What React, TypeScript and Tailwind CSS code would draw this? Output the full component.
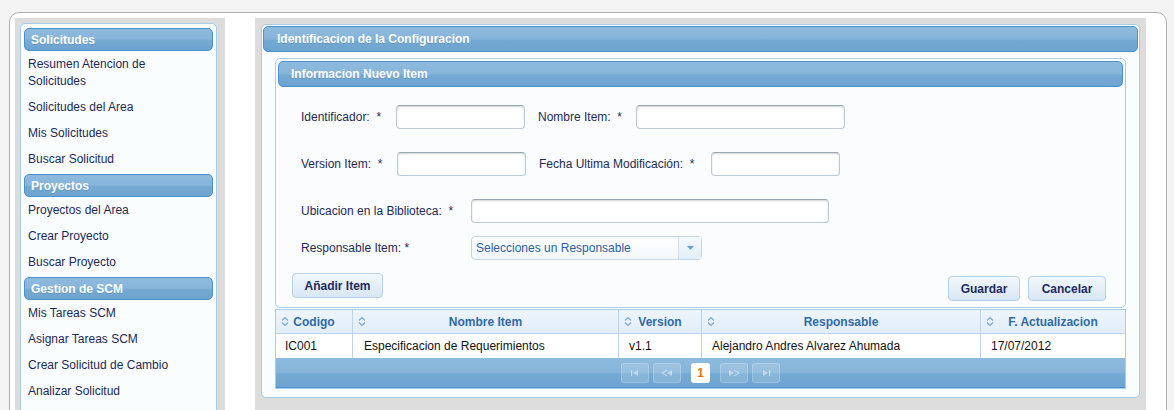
import React from "react";

const barBg =
  "bg-[linear-gradient(180deg,#8dbadd_0%,#87b5da_48%,#74a9d3_56%,#6da4cf_100%)]";

function SideHeader({ title, first }: { title: string; first?: boolean }) {
  return (
    <div
      className={`${first ? "mt-[4px]" : "mt-[2px]"} mx-[3px] h-[23px] rounded-[5px] border border-[#4b90cf] ${barBg} pl-[6px] flex items-center text-[12px] font-bold text-white [text-shadow:0_1px_0_rgba(0,0,0,0.12)]`}
    >
      {title}
    </div>
  );
}

function SideItem({ children }: { children: React.ReactNode }) {
  return (
    <div className="px-[7px] py-[4.5px] text-[12px] leading-[17px] text-[#1c2856]">
      {children}
    </div>
  );
}

function TextInput({ w }: { w: string }) {
  return (
    <input
      type="text"
      className={`${w} h-[24px] rounded-[4px] border border-[#bccad6] border-t-[#9aa6b1] bg-white shadow-[inset_0_1px_2px_rgba(0,0,0,0.18)] outline-none`}
    />
  );
}

function Btn({ label, w }: { label: string; w: string }) {
  return (
    <button
      type="button"
      className={`${w} h-[25px] rounded-[4px] border border-[#b6d0e8] bg-[linear-gradient(180deg,#f1f7fd_0%,#e4eef8_55%,#d8e6f4_100%)] text-[12px] font-bold text-[#1d2c5c]`}
    >
      {label}
    </button>
  );
}

function SortIcon() {
  return (
    <svg
      width="8"
      height="11"
      viewBox="0 0 8 11"
      className="absolute left-[5px] top-[6px]"
    >
      <path d="M1 4.5 L4 1.5 L7 4.5" fill="none" stroke="#7ba8d5" strokeWidth="1.2" />
      <path d="M1 6.5 L4 9.5 L7 6.5" fill="none" stroke="#7ba8d5" strokeWidth="1.2" />
    </svg>
  );
}

function HeadCell({ label, last }: { label: string; last?: boolean }) {
  return (
    <div
      className={`relative flex h-[23px] items-center justify-center text-[12px] font-bold text-[#2f6aa6] ${last ? "" : "border-r border-[#bcd5ec]"}`}
    >
      <SortIcon />
      {label}
    </div>
  );
}

function RowCell({ label, pl, last }: { label: string; pl: string; last?: boolean }) {
  return (
    <div
      className={`flex h-[24px] items-center ${pl} text-[12px] text-[#111] ${last ? "" : "border-r border-[#bcd5ec]"}`}
    >
      {label}
    </div>
  );
}

function PagerBtn({ kind }: { kind: "first" | "prev" | "next" | "last" }) {
  const c = "rgba(255,255,255,0.45)";
  return (
    <div className="flex h-[20px] w-[28px] items-center justify-center rounded-[3px] border border-white/20 bg-white/15">
      <svg width="12" height="6" viewBox="0 0 12 6">
        {kind === "first" && (
          <>
            <rect x="2" y="0" width="1.2" height="6" fill={c} />
            <path d="M9 0 L4 3 L9 6 Z" fill={c} />
          </>
        )}
        {kind === "prev" && (
          <>
            <path d="M6 0 L1 3 L6 6" fill="none" stroke={c} strokeWidth="1.2" />
            <path d="M11 0 L6 3 L11 6 Z" fill={c} />
          </>
        )}
        {kind === "next" && (
          <>
            <path d="M1 0 L6 3 L1 6 Z" fill={c} />
            <path d="M6 0 L11 3 L6 6" fill="none" stroke={c} strokeWidth="1.2" />
          </>
        )}
        {kind === "last" && (
          <>
            <path d="M3 0 L8 3 L3 6 Z" fill={c} />
            <rect x="9" y="0" width="1.2" height="6" fill={c} />
          </>
        )}
      </svg>
    </div>
  );
}

export default function App() {
  return (
    <div className="h-[410px] overflow-hidden bg-[#f4f4f4] pt-[12px] font-['Liberation_Sans',Arial,sans-serif]">
      <div className="ml-[9px] flex h-[420px] w-[1158px] rounded-t-[10px] border border-[#aeaeae] bg-white px-[5px] pt-[5px] pr-[20px]">
        {/* sidebar */}
        <div className="flex w-[210px] flex-col bg-[#dcdcdc] pl-[5px] pr-[8px] pt-[5px]">
          <div className="flex-1 rounded-t-[5px] border border-[#a9cde9] bg-[#fafdfe]">
            <SideHeader title="Solicitudes" first />
            <SideItem>
              Resumen Atencion de
              <br />
              Solicitudes
            </SideItem>
            <SideItem>Solicitudes del Area</SideItem>
            <SideItem>Mis Solicitudes</SideItem>
            <SideItem>Buscar Solicitud</SideItem>
            <SideHeader title="Proyectos" />
            <SideItem>Proyectos del Area</SideItem>
            <SideItem>Crear Proyecto</SideItem>
            <SideItem>Buscar Proyecto</SideItem>
            <SideHeader title="Gestion de SCM" />
            <SideItem>Mis Tareas SCM</SideItem>
            <SideItem>Asignar Tareas SCM</SideItem>
            <SideItem>Crear Solicitud de Cambio</SideItem>
            <SideItem>Analizar Solicitud</SideItem>
          </div>
        </div>

        {/* main */}
        <div className="ml-[30px] w-[891px] bg-[#dcdcdc] px-[6px] pt-[6px]">
          <div className="rounded-[5px] border border-[#a9cde9] bg-[#fafdfe] p-[1px] pb-[8px]">
            <div
              className={`flex h-[26px] items-center rounded-[5px] border border-[#4b90cf] ${barBg} pl-[13px] text-[12px] font-bold text-white [text-shadow:0_1px_0_rgba(0,0,0,0.12)]`}
            >
              Identificacion de la Configuracion
            </div>

            <div className="mx-[12px] mt-[6px] rounded-[5px] border border-[#a9cde9] bg-[#fafcfd] p-[2px] pb-[6px]">
              <div
                className={`flex h-[26px] items-center rounded-[5px] border border-[#4b90cf] ${barBg} pl-[12px] text-[12px] font-bold text-white [text-shadow:0_1px_0_rgba(0,0,0,0.12)]`}
              >
                Informacion Nuevo Item
              </div>

              <div className="pl-[23px] text-[12px] text-[#1f2a56]">
                <div className="mt-[18px] flex items-center">
                  <span className="w-[95px]">Identificador:&nbsp; *</span>
                  <TextInput w="w-[129px]" />
                  <span className="ml-[13px] w-[98px]">Nombre Item:&nbsp; *</span>
                  <TextInput w="w-[209px]" />
                </div>
                <div className="mt-[23px] flex items-center">
                  <span className="w-[96px]">Version Item:&nbsp; *</span>
                  <TextInput w="w-[129px]" />
                  <span className="ml-[13px] w-[172px]">Fecha Ultima Modificación:&nbsp; *</span>
                  <TextInput w="w-[129px]" />
                </div>
                <div className="mt-[23px] flex items-center">
                  <span className="w-[170px]">Ubicacion en la Biblioteca:&nbsp; *</span>
                  <TextInput w="w-[358px]" />
                </div>
                <div className="mt-[13px] flex items-center">
                  <span className="w-[170px]">Responsable Item: *</span>
                  <div className="flex h-[24px] w-[231px] items-center rounded-[4px] border border-[#c3d6e8] bg-[linear-gradient(180deg,#ffffff_0%,#f3f7fb_100%)]">
                    <span className="flex-1 pl-[4px] text-[12px] text-[#2a5fa8]">
                      Selecciones un Responsable
                    </span>
                    <span className="flex h-full w-[23px] items-center justify-center border-l border-[#d3e1ee] bg-[linear-gradient(180deg,#f4f8fc_0%,#e3edf7_100%)]">
                      <svg width="7" height="4" viewBox="0 0 7 4">
                        <path d="M0 0 L7 0 L3.5 4 Z" fill="#6d9fd0" />
                      </svg>
                    </span>
                  </div>
                </div>
              </div>

              <div className="mt-[13px] flex items-start pl-[14px] pr-[17px]">
                <Btn label="Añadir Item" w="w-[91px]" />
                <div className="ml-auto mt-[3px] flex gap-[8px]">
                  <Btn label="Guardar" w="w-[72px]" />
                  <Btn label="Cancelar" w="w-[78px]" />
                </div>
              </div>
            </div>

            {/* table */}
            <div className="mx-[12px] mt-[1px] border border-[#a9cde9]">
              <div className="grid grid-cols-[77px_266px_83px_279px_1fr] border-b border-[#bcd5ec] bg-[linear-gradient(180deg,#edf5fd_0%,#e2edf8_100%)]">
                <HeadCell label="Codigo" />
                <HeadCell label="Nombre Item" />
                <HeadCell label="Version" />
                <HeadCell label="Responsable" />
                <HeadCell label="F. Actualizacion" last />
              </div>
              <div className="grid grid-cols-[77px_266px_83px_279px_1fr] bg-white">
                <RowCell label="IC001" pl="pl-[9px]" />
                <RowCell label="Especificacion de Requerimientos" pl="pl-[11px]" />
                <RowCell label="v1.1" pl="pl-[10px]" />
                <RowCell label="Alejandro Andres Alvarez Ahumada" pl="pl-[10px]" />
                <RowCell label="17/07/2012" pl="pl-[10px]" last />
              </div>
              <div
                className={`flex h-[30px] items-center justify-center border-b border-[#4b90cf] ${barBg}`}
              >
                <div className="flex items-center gap-[4px]">
                  <PagerBtn kind="first" />
                  <PagerBtn kind="prev" />
                </div>
                <div className="mx-[10px] flex h-[20px] w-[19px] items-center justify-center rounded-[3px] bg-white text-[12px] font-bold text-[#e8720e]">
                  1
                </div>
                <div className="flex items-center gap-[4px]">
                  <PagerBtn kind="next" />
                  <PagerBtn kind="last" />
                </div>
              </div>
            </div>
          </div>
        </div>
      </div>
    </div>
  );
}
